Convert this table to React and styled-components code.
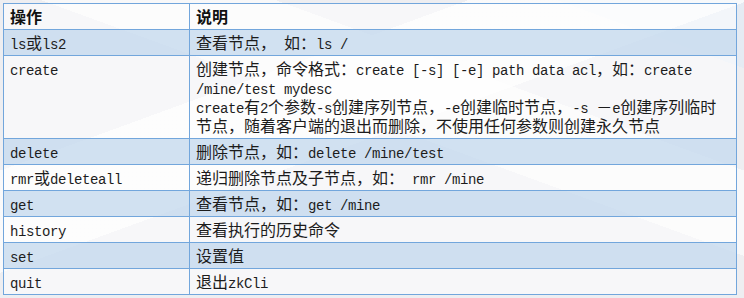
import React from "react";
import styled, { createGlobalStyle } from "styled-components";

const Global = createGlobalStyle`
  html, body { margin: 0; padding: 0; }
  body {
    width: 744px;
    height: 298px;
    overflow: hidden;
    background-color: #eeeef1;
    background-image:
      linear-gradient(160deg, rgba(255,255,255,0) 0 30%, rgba(255,255,255,0.7) 30% 48%, rgba(255,255,255,0) 48%),
      linear-gradient(20deg, rgba(255,255,255,0) 0 55%, rgba(255,255,255,0.6) 55% 70%, rgba(255,255,255,0) 70%),
      linear-gradient(200deg, rgba(220,232,245,0.5) 0 12%, rgba(255,255,255,0) 12%);
    font-family: "Noto Sans CJK SC", "Noto Sans", sans-serif;
    color: #1c1c1c;
  }
`;

const Page = styled.div`
  padding: 3px 0 0 3px;
`;

const Table = styled.table`
  width: 734px;
  border-collapse: collapse;
  table-layout: fixed;
  border: 1px solid #72a6dc;
`;

const Row = styled.tr`
  background: ${(p) => (p.$blue ? "rgba(203,221,239,0.88)" : "rgba(255,255,255,0.55)")};
`;

const Cell = styled.td`
  border: 1px solid #72a6dc;
  padding: 3px 6px 3px 6px;
  font-size: 16px;
  line-height: 19px;
  vertical-align: top;
  white-space: nowrap;
  overflow: hidden;
  width: ${(p) => p.$w || "auto"};
`;

const Head = styled(Cell).attrs({ as: "th" })`
  text-align: left;
  font-weight: 700;
  color: #111;
`;

const Han = styled.span`
  display: inline-block;
  height: 19px;
  line-height: 19px;
  overflow: visible;
`;

const Latin = styled(Han)`
  font-family: "Liberation Mono", "DejaVu Sans Mono", monospace;
  font-size: 14px;
  letter-spacing: -0.4px;
  white-space: pre;
`;

const Line = styled.div`
  height: 19px;
  line-height: 19px;
`;

function T({ s }) {
  const parts = s.match(/[\x20-\x7e]+|[^\x20-\x7e]+/g) || [];
  return parts.map((p, i) =>
    /^[\x20-\x7e]+$/.test(p) ? <Latin key={i}>{p}</Latin> : <Han key={i}>{p}</Han>
  );
}

const rows = [
  ["ls或ls2", ["查看节点， 如：ls /"]],
  [
    "create",
    [
      "创建节点，命令格式：create [-s] [-e] path data acl，如：create",
      "/mine/test mydesc",
      "create有2个参数-s创建序列节点，-e创建临时节点，-s －e创建序列临时",
      "节点，随着客户端的退出而删除，不使用任何参数则创建永久节点",
    ],
  ],
  ["delete", ["删除节点，如：delete /mine/test"]],
  ["rmr或deleteall", ["递归删除节点及子节点，如： rmr /mine"]],
  ["get", ["查看节点，如：get /mine"]],
  ["history", ["查看执行的历史命令"]],
  ["set", ["设置值"]],
  ["quit", ["退出zkCli"]],
];

export default function App() {
  return (
    <Page>
      <Global />
      <Table>
        <thead>
          <Row>
            <Head $w="173px">操作</Head>
            <Head>说明</Head>
          </Row>
        </thead>
        <tbody>
          {rows.map(([op, lines], i) => (
            <Row key={op} $blue={i % 2 === 0}>
              <Cell>
                <Line>
                  <T s={op} />
                </Line>
              </Cell>
              <Cell>
                {lines.map((l, j) => (
                  <Line key={j}>
                    <T s={l} />
                  </Line>
                ))}
              </Cell>
            </Row>
          ))}
        </tbody>
      </Table>
    </Page>
  );
}
